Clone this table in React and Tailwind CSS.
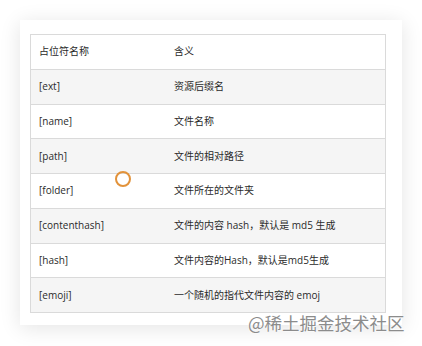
import React from "react";

const rows = [
  ["[ext]", "资源后缀名"],
  ["[name]", "文件名称"],
  ["[path]", "文件的相对路径"],
  ["[folder]", "文件所在的文件夹"],
  ["[contenthash]", "文件的内容 hash，默认是 md5 生成"],
  ["[hash]", "文件内容的Hash，默认是md5生成"],
  ["[emoji]", "一个随机的指代文件内容的 emoj"],
];

export default function App() {
  return (
    <div
      className="relative w-[422px] h-[346px] bg-white overflow-hidden"
      style={{ fontFamily: '"Open Sans", "Noto Sans CJK SC", sans-serif' }}
    >
      <div className="absolute left-[20px] top-[20px] w-[382px] h-[305px] bg-white shadow-[0_3px_20px_rgba(0,0,0,0.11)] pl-[10px] pr-[16px] pt-[14px] overflow-hidden">
        <div className="w-[356px] border-l border-r border-t border-[#dadada] text-[10px] text-[#2a2a2a]">
          <div className="flex items-center h-[34.75px] border-b border-[#dadada] bg-white">
            <div className="w-[134px] pl-[8px]">占位符名称</div>
            <div className="pl-[9px]">含义</div>
          </div>
          {rows.map((r, i) => (
            <div
              key={r[0]}
              className={
                "flex items-center h-[34.75px] border-b border-[#dadada] " +
                (i % 2 === 0 ? "bg-[#f5f5f5]" : "bg-white")
              }
            >
              <div className="w-[134px] pl-[8px]">{r[0]}</div>
              <div className="pl-[9px]">{r[1]}</div>
            </div>
          ))}
        </div>
      </div>
      <div className="absolute left-[115px] top-[171px] w-[16px] h-[16px] rounded-full border-2 border-[#e2923a]" />
      <div
        className="absolute left-[248px] top-[313px] text-[17.5px] leading-[20px] text-[#8c8c8c]"
        style={{
          fontFamily: '"Noto Sans CJK SC", sans-serif',
          textShadow: "0 0 2px #fff, 0 0 2px #fff",
        }}
      >
        @稀土掘金技术社区
      </div>
    </div>
  );
}
